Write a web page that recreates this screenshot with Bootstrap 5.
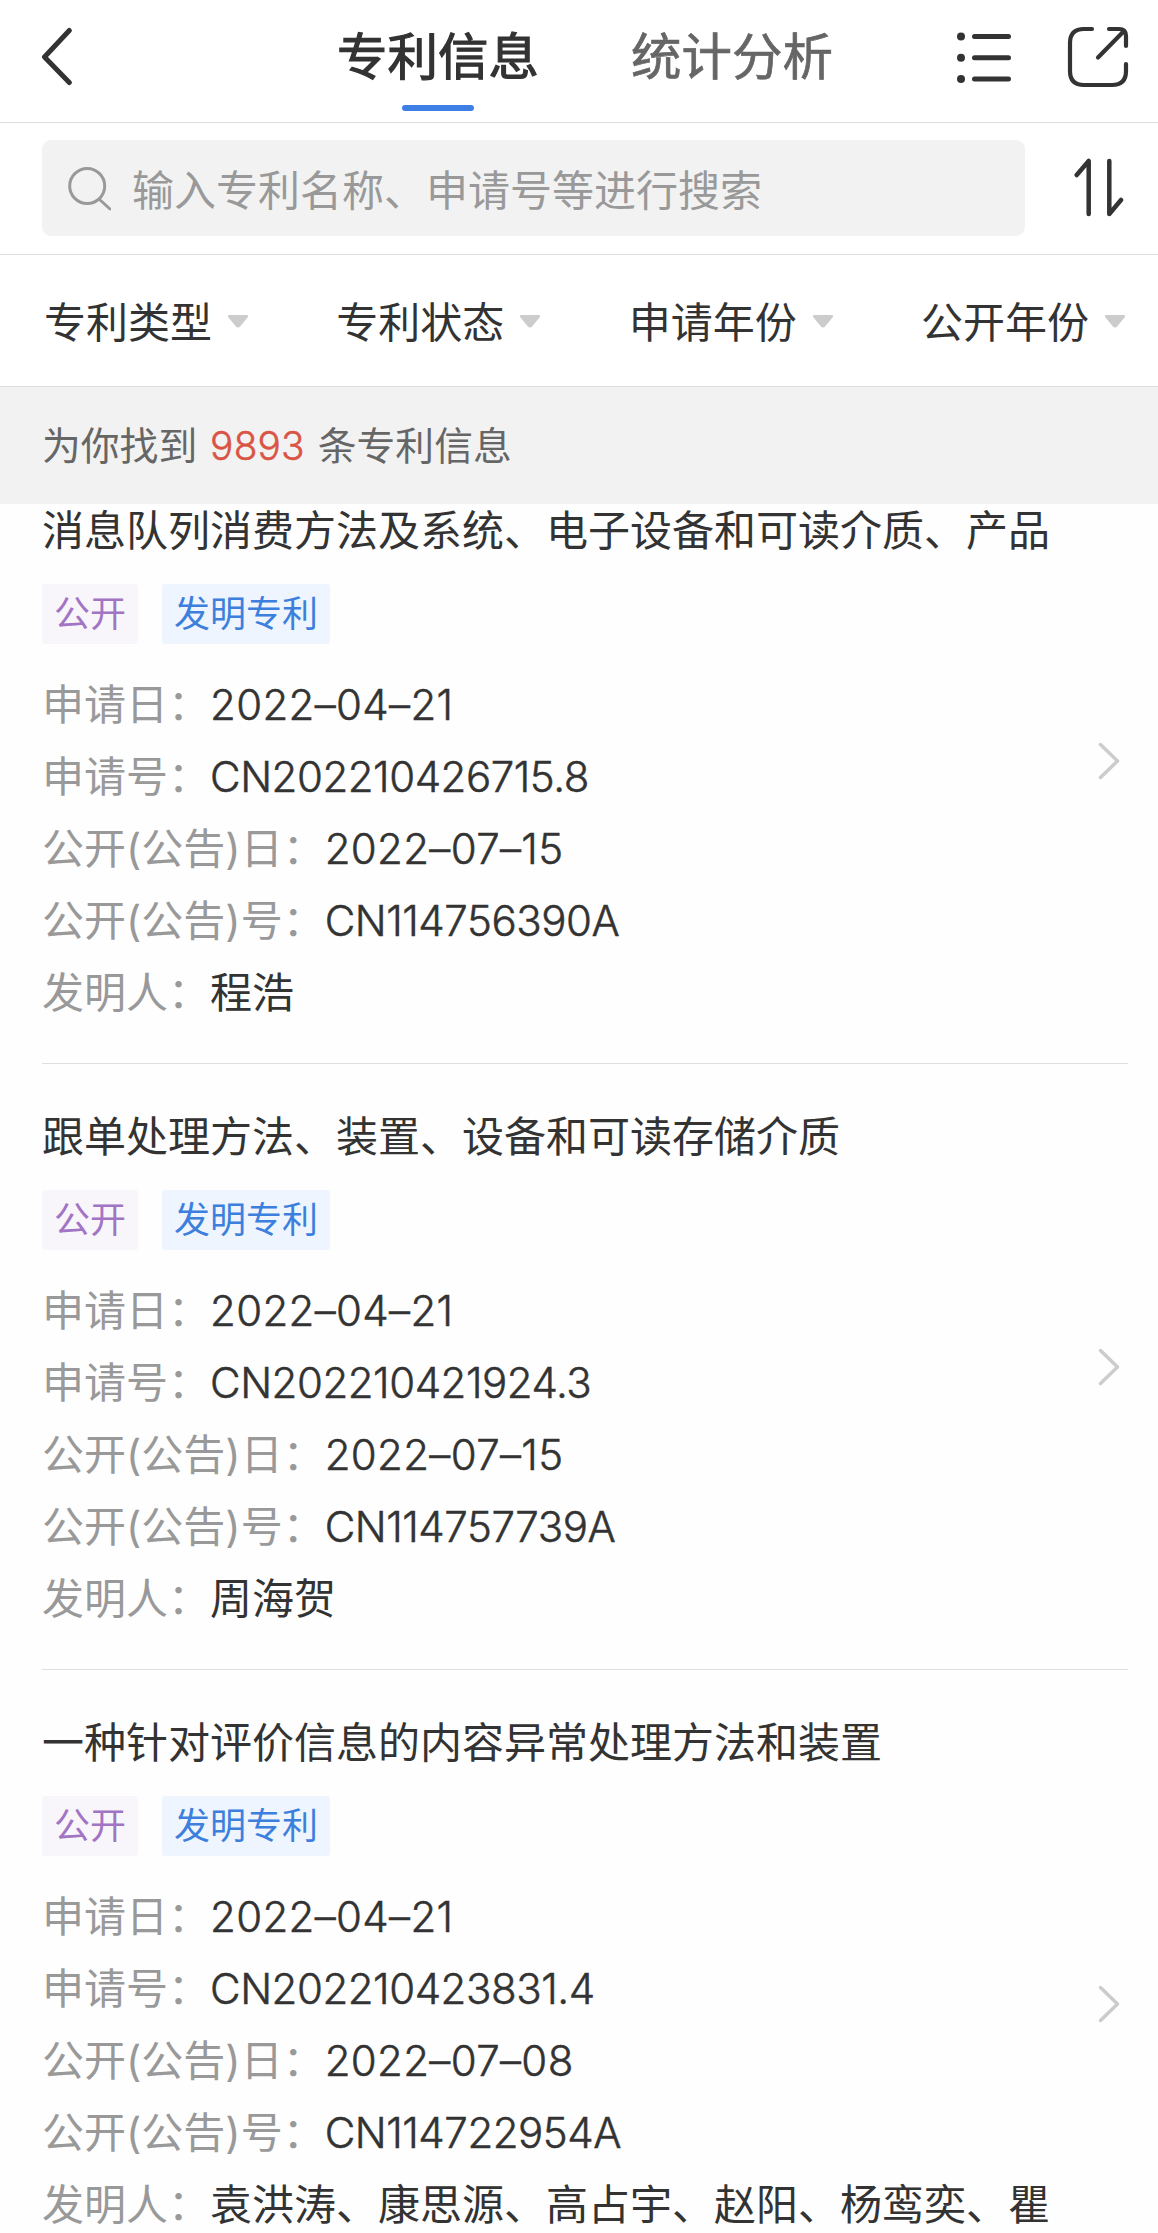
<!DOCTYPE html>
<html lang="zh-CN">
<head>
<meta charset="utf-8">
<meta name="viewport" content="width=device-width, initial-scale=1">
<title>专利信息</title>
<link href="https://cdn.jsdelivr.net/npm/bootstrap@5.3.0/dist/css/bootstrap.min.css" rel="stylesheet">
<style>
body{font-family:Inter,"Noto Sans CJK SC",sans-serif;font-size:42px;color:#333;background:#fff}
.screen{height:2233px;background:#fefefe}
svg{display:block;fill:none;stroke-linecap:round;stroke-linejoin:round}
.line-b{border-bottom:1px solid #dedede}
.topbar{height:123px;padding:0 28px 8px 40px}
.tab-item{font-size:50.5px;line-height:60px;color:#666;-webkit-text-stroke:.7px currentColor;position:relative}
.tab-item.active{color:#333;-webkit-text-stroke-width:1.2px}
.tab-item.active::after{content:"";position:absolute;left:50%;bottom:-24px;width:72px;height:6px;margin-left:-36px;border-radius:3px;background:#3d7fe4}
.tabs-wrap{gap:92px;margin-left:265px}
.searchbar{height:132px;padding:0 33px 1px 42px}
.search-box{width:983px;height:96px;border-radius:9px;background:#f2f2f2;padding-left:25px;color:#999;gap:21px;line-height:60px}
.search-box>div{padding-top:5px}
.filters{height:132px;padding:2px 32px 0 44px;line-height:60px}
.filters>div{gap:15px}
.filters span{padding-top:3px}
.result-bar{height:117px;background:#f2f2f2;padding:1px 42px 0;font-size:38.8px;color:#666;word-spacing:2px}
.result-bar b{font-weight:300;color:#d95445;letter-spacing:.2px;-webkit-text-stroke:.5px currentColor}
.patents{margin-top:-46px}
.patent{margin:0 30px 0 42px;border-bottom:1px solid #dfdfdf;height:606px;padding-right:8px}
.patent.tall{height:668px}
.patent-body{padding-top:43px;align-self:flex-start}
.patent h2{font-size:42px;font-weight:400;line-height:60px;margin:0 0 23px;white-space:nowrap}
.tag-row{gap:24px;margin-bottom:25px}
.tag{height:60px;line-height:61px;font-size:36px;padding:0 12px;border-radius:3px}
.tag-open{color:#a174c4;background:#f8f6fa}
.tag-kind{color:#3d7fdd;background:#eff5fe}
.meta{line-height:72px;height:72px;white-space:nowrap}
.meta span{color:#999}
.num,.date{font-weight:300;font-style:normal;letter-spacing:-.45px;-webkit-text-stroke:.5px currentColor}
.date{letter-spacing:.35px}
</style>
<script src="https://cdn.jsdelivr.net/npm/bootstrap@5.3.0/dist/js/bootstrap.bundle.min.js"></script>
</head>
<body>
<div class="screen overflow-hidden">
<header class="position-relative z-1 bg-white">
  <nav class="topbar line-b d-flex align-items-center">
    <svg width="32" height="60" viewBox="40 28 32 60" stroke="#333" stroke-width="5"><path d="M69.3 31.5 44.5 58 69.3 83.5"/></svg>
    <div class="tabs-wrap d-flex">
      <div class="tab-item active">专利信息</div>
      <div class="tab-item">统计分析</div>
    </div>
    <svg class="ms-auto" width="56" height="60" viewBox="956 27 56 60" stroke="#333" stroke-width="5"><path d="M974.5 36.5H1008.5M974.5 57.7H1008.5M974.5 79H1008.5"/><g fill="#333" stroke="none"><circle cx="961" cy="36.5" r="4"/><circle cx="961" cy="57.7" r="4"/><circle cx="961" cy="79" r="4"/></g></svg>
    <svg style="margin-left:55px" width="63" height="62" viewBox="1067 26 63 62" stroke="#333" stroke-width="4.2"><path d="M1092 29H1084Q1070 29 1070 43V71Q1070 85 1084 85H1112Q1126 85 1126 71V64M1109 29H1119Q1126 29 1126 36V46M1098 57.5 1124 31"/></svg>
  </nav>
  <div class="searchbar line-b d-flex align-items-center justify-content-between">
    <div class="search-box d-flex align-items-center">
      <svg width="44" height="46" viewBox="67 164 44 46" stroke="#999" stroke-width="3"><circle cx="87.2" cy="185" r="17.5"/><path d="M99.5 198.5 110 208"/></svg>
      <div>输入专利名称、申请号等进行搜索</div>
    </div>
    <svg width="51" height="62" viewBox="1073 157 51 62" stroke="#333" stroke-width="4.5"><path d="M1075.7 175 1087.7 161V214M1108.3 161V214L1120 200"/></svg>
  </div>
  <div class="filters line-b d-flex align-items-center justify-content-between">
    <div class="d-flex align-items-center"><span>专利类型</span><svg width="22" height="13" viewBox="0 0 22 13"><path fill="#ccc" d="M2.5 0H19.5Q22 0 20.5 2.5L13.5 11Q11 14 8.5 11L1.5 2.5Q0 0 2.5 0Z"/></svg></div>
    <div class="d-flex align-items-center"><span>专利状态</span><svg width="22" height="13" viewBox="0 0 22 13"><path fill="#ccc" d="M2.5 0H19.5Q22 0 20.5 2.5L13.5 11Q11 14 8.5 11L1.5 2.5Q0 0 2.5 0Z"/></svg></div>
    <div class="d-flex align-items-center"><span>申请年份</span><svg width="22" height="13" viewBox="0 0 22 13"><path fill="#ccc" d="M2.5 0H19.5Q22 0 20.5 2.5L13.5 11Q11 14 8.5 11L1.5 2.5Q0 0 2.5 0Z"/></svg></div>
    <div class="d-flex align-items-center"><span>公开年份</span><svg width="22" height="13" viewBox="0 0 22 13"><path fill="#ccc" d="M2.5 0H19.5Q22 0 20.5 2.5L13.5 11Q11 14 8.5 11L1.5 2.5Q0 0 2.5 0Z"/></svg></div>
  </div>
  <div class="result-bar d-flex align-items-center"><div>为你找到 <b>9893</b> 条专利信息</div></div>
</header>
<main class="patents">
  <article class="patent d-flex align-items-center justify-content-between">
    <div class="patent-body">
      <h2>消息队列消费方法及系统、电子设备和可读介质、产品</h2>
      <div class="tag-row d-flex"><div class="tag tag-open">公开</div><div class="tag tag-kind">发明专利</div></div>
      <div class="meta"><span>申请日：</span><i class="date">2022–04–21</i></div>
      <div class="meta"><span>申请号：</span><i class="num">CN202210426715.8</i></div>
      <div class="meta"><span>公开(公告)日：</span><i class="date">2022–07–15</i></div>
      <div class="meta"><span>公开(公告)号：</span><i class="num">CN114756390A</i></div>
      <div class="meta"><span>发明人：</span>程浩</div>
    </div>
    <svg width="22" height="40" viewBox="0 0 22 40" stroke="#ccc" stroke-width="3.5"><path d="M2.5 3.5 19.5 20 2.5 36.5"/></svg>
  </article>
  <article class="patent d-flex align-items-center justify-content-between">
    <div class="patent-body">
      <h2>跟单处理方法、装置、设备和可读存储介质</h2>
      <div class="tag-row d-flex"><div class="tag tag-open">公开</div><div class="tag tag-kind">发明专利</div></div>
      <div class="meta"><span>申请日：</span><i class="date">2022–04–21</i></div>
      <div class="meta"><span>申请号：</span><i class="num">CN202210421924.3</i></div>
      <div class="meta"><span>公开(公告)日：</span><i class="date">2022–07–15</i></div>
      <div class="meta"><span>公开(公告)号：</span><i class="num">CN114757739A</i></div>
      <div class="meta"><span>发明人：</span>周海贺</div>
    </div>
    <svg width="22" height="40" viewBox="0 0 22 40" stroke="#ccc" stroke-width="3.5"><path d="M2.5 3.5 19.5 20 2.5 36.5"/></svg>
  </article>
  <article class="patent tall d-flex align-items-center justify-content-between">
    <div class="patent-body">
      <h2>一种针对评价信息的内容异常处理方法和装置</h2>
      <div class="tag-row d-flex"><div class="tag tag-open">公开</div><div class="tag tag-kind">发明专利</div></div>
      <div class="meta"><span>申请日：</span><i class="date">2022–04–21</i></div>
      <div class="meta"><span>申请号：</span><i class="num">CN202210423831.4</i></div>
      <div class="meta"><span>公开(公告)日：</span><i class="date">2022–07–08</i></div>
      <div class="meta"><span>公开(公告)号：</span><i class="num">CN114722954A</i></div>
      <div class="meta"><span>发明人：</span>袁洪涛、康思源、高占宇、赵阳、杨鸾奕、瞿</div>
    </div>
    <svg width="22" height="40" viewBox="0 0 22 40" stroke="#ccc" stroke-width="3.5"><path d="M2.5 3.5 19.5 20 2.5 36.5"/></svg>
  </article>
</main>
</div>
</body>
</html>
